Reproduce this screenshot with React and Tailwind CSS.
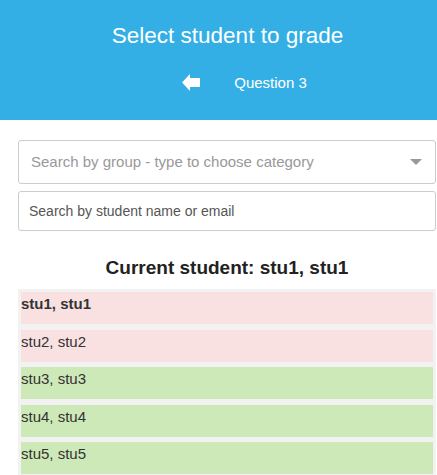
import React from 'react';

const students = [
  { name: 'stu1, stu1', graded: false, current: true },
  { name: 'stu2, stu2', graded: false },
  { name: 'stu3, stu3', graded: true },
  { name: 'stu4, stu4', graded: true },
  { name: 'stu5, stu5', graded: true },
];

const App = () => {
  return (
    <div className="w-[437px] h-[475px] overflow-hidden bg-white text-[#333]" style={{ fontFamily: '"Liberation Sans", Arial, sans-serif' }}>
      {/* Header */}
      <div className="bg-[#33afe6] h-[120px] text-white flex flex-col items-center pl-[18px]">
        <h1 className="text-[22.5px] leading-none mt-[25px]">Select student to grade</h1>
        <div className="flex items-center mt-[24px] ml-[34px]">
          <svg width="18" height="17" viewBox="0 0 18 17" className="mr-[34px]">
            <polygon points="0,8.5 8,0 8,4 18,4 18,13 8,13 8,17" fill="#fff" />
          </svg>
          <span className="text-[15px]">Question 3</span>
        </div>
      </div>

      <div className="pl-[18px] pr-[1px] pt-[20px]">
        {/* Group select */}
        <div className="h-[44px] border border-[#ccc] rounded-[3px] flex items-center justify-between pl-[12px] pr-[13px]">
          <span className="text-[15px] text-[#999]">Search by group - type to choose category</span>
          <svg width="12" height="6" viewBox="0 0 12 6">
            <polygon points="0,0 12,0 6,6" fill="#999" />
          </svg>
        </div>

        {/* Name search */}
        <div className="h-[40px] mt-[7px] border border-[#ccc] rounded-[3px] flex items-center pl-[10px]">
          <span className="text-[14px] text-[#555]">Search by student name or email</span>
        </div>

        <h2 className="text-[19px] leading-[22px] font-bold text-center text-[#222] mt-[26px] mb-[10px]">Current student: stu1, stu1</h2>

        {/* Student list */}
        <div className="bg-[#f2f2f2] px-[3px] pt-[3px] pb-[3px] flex flex-col gap-[5.5px]">
          {students.map((s) => (
            <div
              key={s.name}
              className={`h-[32px] pt-[3px] text-[15px] leading-[18px] ${s.graded ? 'bg-[#cde9b7]' : 'bg-[#f9e1e1]'} ${s.current ? 'font-bold' : ''}`}
            >
              {s.name}
            </div>
          ))}
        </div>
      </div>
    </div>
  );
};

export default App;
